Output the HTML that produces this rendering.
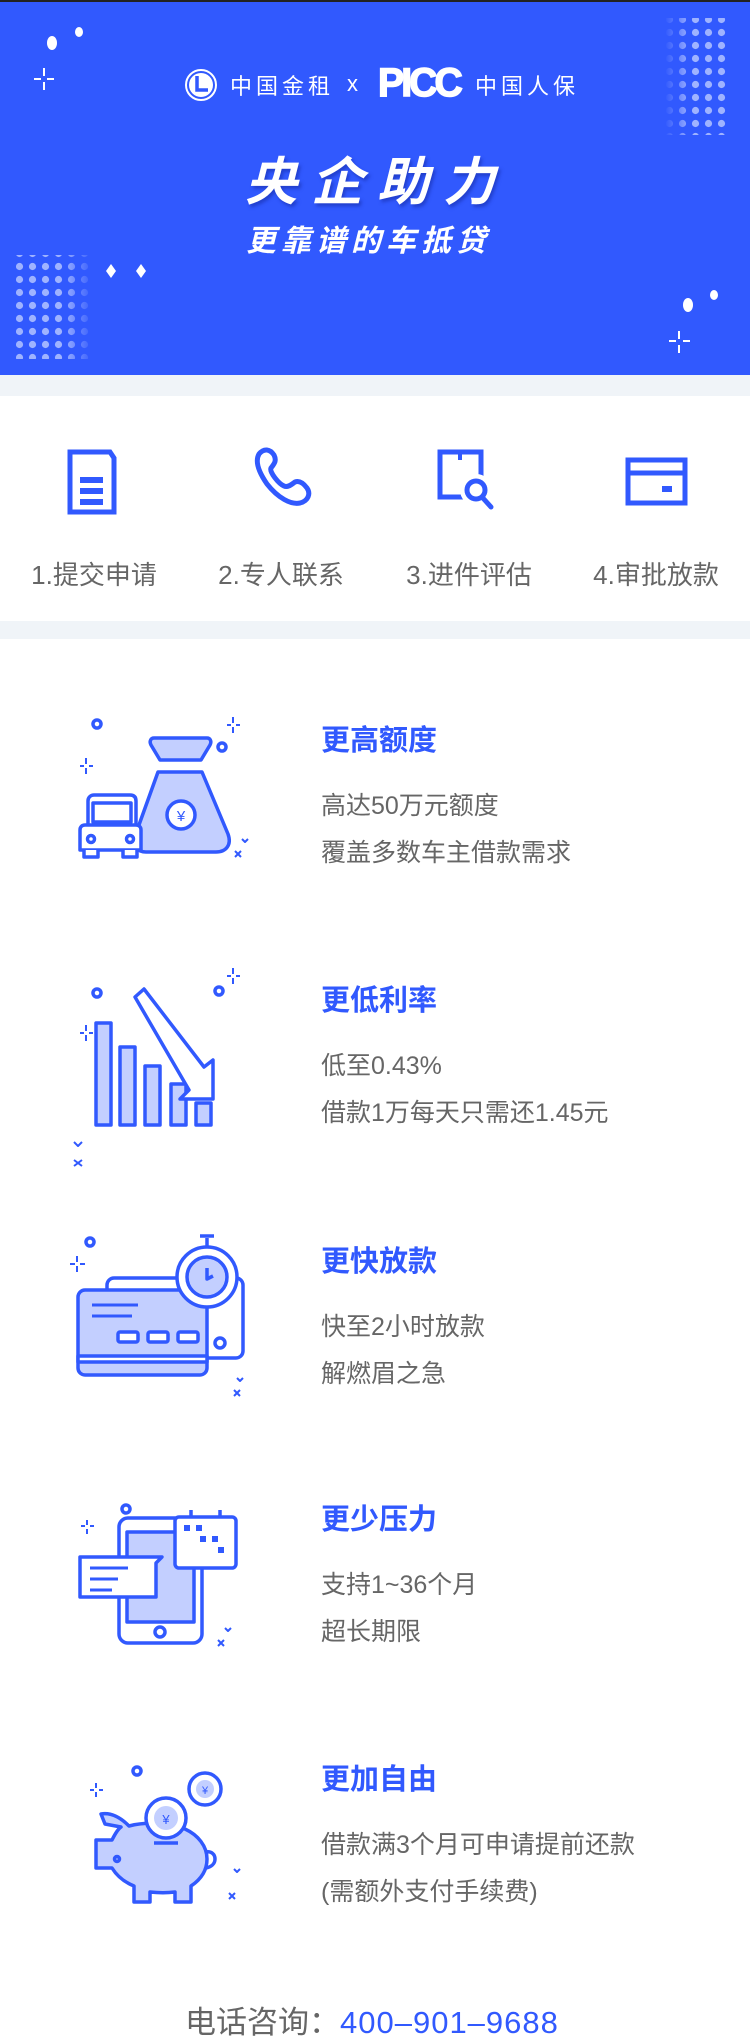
<!DOCTYPE html>
<html><head><meta charset="utf-8"><style>
*{margin:0;padding:0;box-sizing:border-box}
html,body{width:750px;height:2043px;overflow:hidden}
body{position:relative;background:#fff;font-family:"Liberation Sans","Noto Sans CJK SC",sans-serif}
.a{position:absolute;white-space:nowrap}
.banner{position:absolute;left:0;top:0;width:750px;height:375px;background:#3159FE;border-top:2px solid #222}
.gray{position:absolute;left:0;width:750px;background:#F0F4F8}
.lbl{position:absolute;top:555px;width:188px;text-align:center;font-size:26px;color:#666}
.t{position:absolute;left:321px;font-size:29px;color:#3159FE;font-weight:bold}
.d{position:absolute;left:321px;font-size:25px;color:#666;line-height:47px}
</style></head><body>
<div class="banner"></div>
<svg class="a" style="left:0;top:0" width="750" height="375">
<defs><pattern id="dp" width="13" height="13" patternUnits="userSpaceOnUse"><circle cx="6.5" cy="6.5" r="3.6" fill="#9FB3FF"/></pattern>
<linearGradient id="fr" x1="0" x2="1"><stop offset="0" stop-color="#3159FE" stop-opacity="1"/><stop offset="0.4" stop-color="#3159FE" stop-opacity="0"/></linearGradient>
<linearGradient id="fl" x1="0" x2="1"><stop offset="0.6" stop-color="#3159FE" stop-opacity="0"/><stop offset="1" stop-color="#3159FE" stop-opacity="1"/></linearGradient></defs>
<rect x="665" y="18" width="65" height="117" fill="url(#dp)"/><rect x="665" y="18" width="65" height="117" fill="url(#fr)"/>
<rect x="16" y="255" width="78" height="104" fill="url(#dp)"/><rect x="16" y="255" width="78" height="104" fill="url(#fl)"/>
<g fill="#fff"><ellipse cx="52" cy="43" rx="5" ry="7"/><ellipse cx="79" cy="32" rx="4" ry="5"/><ellipse cx="688" cy="305" rx="5" ry="7"/><ellipse cx="714" cy="295" rx="4" ry="5"/>
<path d="M111 264l5 7-5 7-5-7z M141 264l5 7-5 7-5-7z"/></g>
<g stroke="#fff" stroke-width="2"><path d="M44 68v8M44 82v8M34 79h7M47 79h7"/><path d="M679 331v8M679 345v8M669 341h7M683 341h7"/></g>
<circle cx="201" cy="85" r="15" fill="none" stroke="#fff" stroke-width="2"/><circle cx="201" cy="85" r="12" fill="#fff"/><path d="M197 76v14h11" stroke="#3159FE" stroke-width="3.5" fill="none"/>
</svg>
<div class="a" style="left:230px;top:69px;font-size:22px;color:#fff;letter-spacing:4px">中国金租</div>
<div class="a" style="left:347px;top:71px;font-size:22px;color:#fff">x</div>
<div class="a" style="left:378px;top:61px;font-size:40px;color:#fff;font-weight:bold;letter-spacing:-3px;transform:scaleX(0.98);transform-origin:left;-webkit-text-stroke:1.5px #fff">PICC</div>
<div class="a" style="left:475px;top:69px;font-size:22px;color:#fff;letter-spacing:4px">中国人保</div>
<div class="a" style="left:245px;top:140px;font-size:52px;color:#fff;font-weight:bold;font-style:italic;letter-spacing:14px;text-shadow:2px 3px 3px rgba(20,40,160,.5)">央企助力</div>
<div class="a" style="left:246px;top:216px;font-size:30px;color:#fff;font-style:italic;letter-spacing:5px;font-weight:bold">更靠谱的车抵贷</div>

<div class="gray" style="top:375px;height:21px"></div>
<div class="gray" style="top:621px;height:18px"></div>

<svg class="a" style="left:0;top:440px" width="750" height="80" fill="none" stroke="#3159FE" stroke-width="5">
<path d="M70 12h40l4 6v54h-44z"/><path d="M80 40h23M80 51h23M80 62h23" stroke-width="6"/>
<path d="M259 14c5-6 11-5 15 1 3 6 0 9-3 13-2 4 8 16 13 18 4 2 8-2 11-4 5-2 9 2 12 6 4 6 1 13-7 15-9 2-22-5-33-19-9-13-12-23-8-30z" stroke-width="5"/>
<rect x="440" y="12" width="41" height="45" stroke-width="5"/><path d="M460 12v8" stroke-width="4"/>
<circle cx="476" cy="50" r="13" fill="#fff" stroke="#fff" stroke-width="6"/>
<circle cx="476" cy="50" r="9" fill="#fff"/><path d="M482 57l9 10" stroke-linecap="round"/>
<rect x="628" y="20" width="57" height="43"/><path d="M628 33h57"/><rect x="662" y="46" width="10" height="6" fill="#3159FE" stroke="none"/>
</svg>
<div class="lbl" style="left:0">1.提交申请</div>
<div class="lbl" style="left:187px">2.专人联系</div>
<div class="lbl" style="left:375px">3.进件评估</div>
<div class="lbl" style="left:562px">4.审批放款</div>

<div class="t" style="top:717px">更高额度</div>
<div class="d" style="top:783px">高达50万元额度<br>覆盖多数车主借款需求</div>
<div class="t" style="top:977px">更低利率</div>
<div class="d" style="top:1043px">低至0.43%<br>借款1万每天只需还1.45元</div>
<div class="t" style="top:1238px">更快放款</div>
<div class="d" style="top:1304px">快至2小时放款<br>解燃眉之急</div>
<div class="t" style="top:1496px">更少压力</div>
<div class="d" style="top:1562px">支持1~36个月<br>超长期限</div>
<div class="t" style="top:1756px">更加自由</div>
<div class="d" style="top:1822px">借款满3个月可申请提前还款<br>(需额外支付手续费)</div>

<svg class="a" style="left:0;top:700px" width="300" height="1260" fill="none" stroke="#3159FE" stroke-width="3.5" stroke-linejoin="round">
<g>
<circle cx="97" cy="24" r="4"/><circle cx="222" cy="47" r="4"/>
<path d="M86 58v6M86 68v6M80 66h4M89 66h4M233 17v6M233 27v6M227 25h4M236 25h4" stroke-width="2"/>
<path d="M154 38h53c3 0 5 3 3 7l-9 15h-41l-9-15c-2-4 0-7 3-7z" fill="#C3CFFF"/>
<path d="M158 72h44l26 62c4 11-2 18-12 18h-70c-9 0-14-7-11-16z" fill="#C3CFFF"/>
<circle cx="181" cy="115" r="14" fill="#fff"/><text x="181" y="121" font-size="15" fill="#3159FE" stroke="none" text-anchor="middle">¥</text>
<path d="M88 128V101c0-4 3-6 6-6h36c4 0 6 2 6 6v27" fill="#fff"/>
<rect x="93" y="103" width="38" height="19" fill="#fff"/>
<path d="M80 130c0-3 2-5 5-5h51c3 0 5 2 5 5v20H80z" fill="#fff"/>
<path d="M84 150v7h14v-7M123 150v7h14v-7" fill="#fff"/>
<circle cx="91" cy="139" r="3.5"/><circle cx="130" cy="139" r="3.5"/>
<path d="M242 139l3 3 3-3M235 151l6 6M241 151l-6 6" stroke-width="2"/>
</g>
<g>
<circle cx="97" cy="293" r="4"/><circle cx="219" cy="291" r="4"/>
<path d="M86 325v6M86 335v6M80 333h4M89 333h4M233 268v6M233 278v6M227 276h4M236 276h4M82 442l-4 4-4-4M74 460l8 6M82 460l-8 6" stroke-width="2"/>
<path d="M96 323h15v102h-15zM120 347h15v78h-15zM145 366h15v59h-15zM171 384h15v41h-15zM196 403h15v22h-15z" fill="#C3CFFF"/>
<path d="M135 297l9-8 60 78 9-7v39h-33l9-9z" fill="#fff"/>
</g>
<g>
<circle cx="90" cy="542" r="4"/><path d="M77 556v6M77 566v6M70 564h5M80 564h5" stroke-width="2"/>
<path d="M243 678l-3 3-3-3M234 690l6 6M240 690l-6 6" stroke-width="2"/>
<rect x="107" y="578" width="136" height="80" rx="7" fill="#fff"/>
<rect x="78" y="590" width="129" height="85" rx="7" fill="#C3CFFF"/>
<path d="M78 656h129v6H78z" fill="#fff"/>
<path d="M92 605h46M92 616h40" stroke-width="3"/>
<rect x="118" y="632" width="20" height="10" rx="2" fill="#fff"/><rect x="148" y="632" width="20" height="10" rx="2" fill="#fff"/><rect x="178" y="632" width="20" height="10" rx="2" fill="#fff"/>
<circle cx="207" cy="577" r="30" fill="#fff"/><circle cx="207" cy="577" r="20" fill="#C3CFFF"/><path d="M207 568v11l6-3M207 546v-8M200 536h14"/>
<circle cx="220" cy="643" r="5"/>
</g>
<g>
<circle cx="126" cy="809" r="4"/><path d="M87 820v5M87 829v5M81 826h4M90 826h4M225 928l3 3 3-3M218 940l6 6M224 940l-6 6" stroke-width="2"/>
<rect x="119" y="818" width="83" height="125" rx="9" fill="#fff"/><rect x="127" y="832" width="67" height="90" fill="#C3CFFF"/><circle cx="160" cy="932" r="5"/>
<rect x="175" y="817" width="61" height="51" rx="4" fill="#fff"/><path d="M191 810v7M220 810v7"/>
<rect x="184" y="825" width="6" height="6" fill="#3159FE" stroke="none"/><rect x="196" y="825" width="6" height="6" fill="#3159FE" stroke="none"/><rect x="200" y="836" width="6" height="6" fill="#3159FE" stroke="none"/><rect x="212" y="836" width="6" height="6" fill="#3159FE" stroke="none"/><rect x="218" y="847" width="6" height="6" fill="#3159FE" stroke="none"/>
<path d="M80 857h82l-6 6v34H80z" fill="#fff"/><path d="M90 868h38M90 879h28M90 890h22" stroke-width="3"/>
</g>
<g>
<circle cx="137" cy="1071" r="4"/><path d="M96 1083v5M96 1092v5M90 1090h4M99 1090h4M234 1169l3 3 3-3M229 1193l6 6M235 1193l-6 6" stroke-width="2"/>
<g transform="translate(-16,12)">
<path d="M121 1112l-4-10c12-2 22 6 28 12 15-4 40-4 56 3 13 6 22 17 22 30 0 12-7 21-16 27v16h-16v-10c-8 1-16 1-25 0v10h-16v-16c-10-4-17-10-22-18h-16v-28h16c3-6 6-11 9-13z" fill="#C3CFFF"/>
<circle cx="133" cy="1147" r="2.5"/>
<path d="M222 1140c5-1 9 2 9 7 0 5-4 8-9 9"/>
</g>
<circle cx="166" cy="1118" r="20" fill="#fff"/><circle cx="166" cy="1118" r="12" fill="#C3CFFF" stroke="none"/>
<text x="166" y="1124" font-size="13" fill="#3159FE" stroke="none" text-anchor="middle">¥</text>
<path d="M154 1143h24"/>
<circle cx="205" cy="1089" r="16" fill="#fff"/><circle cx="205" cy="1089" r="9" fill="#C3CFFF" stroke="none"/>
<text x="205" y="1094" font-size="11" fill="#3159FE" stroke="none" text-anchor="middle">¥</text>
</g>
</svg>

<div class="a" style="left:185px;top:1997px;font-size:31px;color:#666">电话咨询：<span style="color:#3159FE;letter-spacing:1px">400–901–9688</span></div>
</body></html>
